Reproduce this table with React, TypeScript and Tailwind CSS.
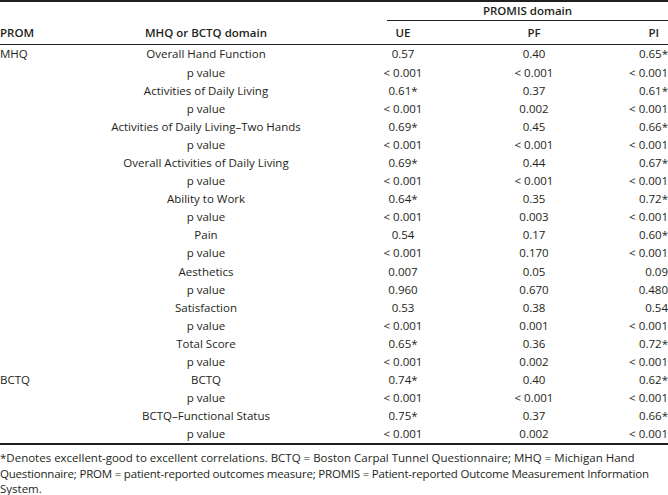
import React from "react";

type Row = {
  prom?: string;
  domain: string;
  ue: string;
  pf: string;
  pi: string;
};

const rows: Row[] = [
  { prom: "MHQ", domain: "Overall Hand Function", ue: "0.57", pf: "0.40", pi: "0.65*" },
  { domain: "p value", ue: "< 0.001", pf: "< 0.001", pi: "< 0.001" },
  { domain: "Activities of Daily Living", ue: "0.61*", pf: "0.37", pi: "0.61*" },
  { domain: "p value", ue: "< 0.001", pf: "0.002", pi: "< 0.001" },
  { domain: "Activities of Daily Living–Two Hands", ue: "0.69*", pf: "0.45", pi: "0.66*" },
  { domain: "p value", ue: "< 0.001", pf: "< 0.001", pi: "< 0.001" },
  { domain: "Overall Activities of Daily Living", ue: "0.69*", pf: "0.44", pi: "0.67*" },
  { domain: "p value", ue: "< 0.001", pf: "< 0.001", pi: "< 0.001" },
  { domain: "Ability to Work", ue: "0.64*", pf: "0.35", pi: "0.72*" },
  { domain: "p value", ue: "< 0.001", pf: "0.003", pi: "< 0.001" },
  { domain: "Pain", ue: "0.54", pf: "0.17", pi: "0.60*" },
  { domain: "p value", ue: "< 0.001", pf: "0.170", pi: "< 0.001" },
  { domain: "Aesthetics", ue: "0.007", pf: "0.05", pi: "0.09" },
  { domain: "p value", ue: "0.960", pf: "0.670", pi: "0.480" },
  { domain: "Satisfaction", ue: "0.53", pf: "0.38", pi: "0.54" },
  { domain: "p value", ue: "< 0.001", pf: "0.001", pi: "< 0.001" },
  { domain: "Total Score", ue: "0.65*", pf: "0.36", pi: "0.72*" },
  { domain: "p value", ue: "< 0.001", pf: "0.002", pi: "< 0.001" },
  { prom: "BCTQ", domain: "BCTQ", ue: "0.74*", pf: "0.40", pi: "0.62*" },
  { domain: "p value", ue: "< 0.001", pf: "< 0.001", pi: "< 0.001" },
  { domain: "BCTQ–Functional Status", ue: "0.75*", pf: "0.37", pi: "0.66*" },
  { domain: "p value", ue: "< 0.001", pf: "0.002", pi: "< 0.001" },
];

export default function App() {
  return (
    <div className="w-[668px] h-[495px] bg-white overflow-hidden font-['Open_Sans',sans-serif] text-[11.5px] text-[#231f20]">
      <div className="border-t-2 border-[#231f20]">
        {/* spanner header */}
        <div className="flex h-[19px]">
          <div className="ml-[387px] flex-1 border-b border-[#231f20] font-semibold text-center leading-[18px]">
            PROMIS domain
          </div>
        </div>
        {/* column headers */}
        <div className="flex h-[24px] items-center border-b border-[#231f20] font-semibold">
          <div className="w-[100px]">PROM</div>
          <div className="w-[212px] text-center">MHQ or BCTQ domain</div>
          <div className="w-[182px] text-center">UE</div>
          <div className="w-[80px] text-center">PF</div>
          <div className="flex-1 text-right pr-[9px]">PI</div>
        </div>
        {rows.map((r, i) => (
          <div key={i} className="flex h-[18.1px] items-center whitespace-nowrap">
            <div className="w-[100px]">{r.prom ?? ""}</div>
            <div className="w-[212px] text-center">{r.domain}</div>
            <div className="w-[182px] text-center">{r.ue}</div>
            <div className="w-[80px] text-center">{r.pf}</div>
            <div className="flex-1 text-right">{r.pi}</div>
          </div>
        ))}
      </div>
      <div className="border-t-2 border-[#231f20] pt-[5px] leading-[15.5px] whitespace-nowrap">
        <div>
          *Denotes excellent-good to excellent correlations. BCTQ = Boston Carpal Tunnel Questionnaire; MHQ = Michigan Hand
        </div>
        <div className="tracking-[-0.2px]">
          Questionnaire; PROM = patient-reported outcomes measure; PROMIS = Patient-reported Outcome Measurement Information
        </div>
        <div>System.</div>
      </div>
    </div>
  );
}
